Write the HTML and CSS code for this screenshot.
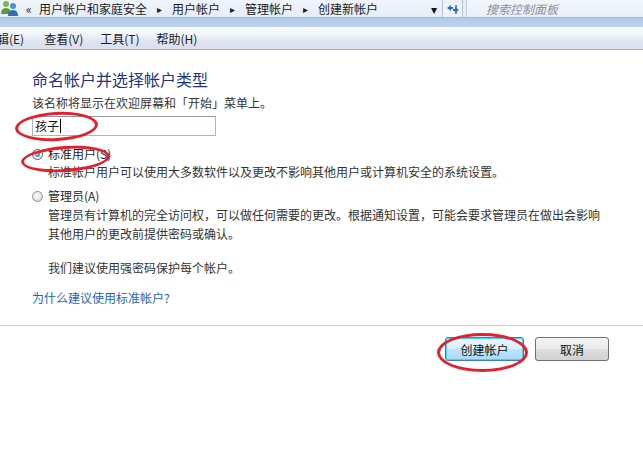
FILE: index.html
```html
<!DOCTYPE html>
<html lang="zh-CN">
<head>
<meta charset="utf-8">
<title>创建新帐户</title>
<link rel="stylesheet" href="styles.css">
</head>
<body>
<div class="window">
  <div class="addrbar">
    <div class="addr">
      <svg class="users-icon" width="18" height="16" viewBox="0 0 18 16">
        <circle cx="5" cy="4" r="3" fill="#7fb84a"/>
        <path d="M0 14 Q0 8 5 8 Q10 8 10 14 Z" fill="#5e9a2f"/>
        <circle cx="12" cy="6" r="3" fill="#4a8fd8"/>
        <path d="M7 16 Q7 10 12 10 Q17 10 17 16 Z" fill="#2f6fb8"/>
      </svg>
      <span class="chev">«</span>
      <span class="crumb">用户帐户和家庭安全</span><span class="sep">▸</span>
      <span class="crumb">用户帐户</span><span class="sep">▸</span>
      <span class="crumb">管理帐户</span><span class="sep">▸</span>
      <span class="crumb">创建新帐户</span>
      <span class="drop">▾</span>
    </div>
    <div class="refresh">
      <svg width="16" height="14" viewBox="0 0 16 14">
        <path d="M2 6 L6 3 L6 5 L8 5 L8 7 L6 7 L6 9 Z" fill="#2a6fb5"/>
        <path d="M14 8 L10 11 L10 9 L8 9 L8 7 L10 7 L10 5 Z" fill="#2a6fb5"/>
        <path d="M11 3 L11 12" stroke="#2a6fb5" stroke-width="1.5"/>
      </svg>
    </div>
    <div class="search">搜索控制面板</div>
  </div>
  <div class="band"></div>
  <div class="menubar">
    <span class="menu cut">辑(E)</span>
    <span class="menu">查看(V)</span>
    <span class="menu">工具(T)</span>
    <span class="menu">帮助(H)</span>
  </div>

  <div class="content">
    <h1 class="title">命名帐户并选择帐户类型</h1>
    <p class="hint">该名称将显示在欢迎屏幕和「开始」菜单上。</p>
    <div class="namebox"><span class="val">孩子</span><span class="caret"></span></div>

    <div class="option opt1">
      <span class="radio checked"></span><span class="label">标准用户(S)</span>
    </div>
    <p class="desc">标准帐户用户可以使用大多数软件以及更改不影响其他用户或计算机安全的系统设置。</p>

    <div class="option opt2">
      <span class="radio"></span><span class="label">管理员(A)</span>
    </div>
    <p class="desc desc2">管理员有计算机的完全访问权，可以做任何需要的更改。根据通知设置，可能会要求管理员在做出会影响<br>其他用户的更改前提供密码或确认。</p>

    <p class="desc recommend">我们建议使用强密码保护每个帐户。</p>

    <a class="link" href="#">为什么建议使用标准帐户?</a>
  </div>

  <div class="footer">
    <button class="btn primary">创建帐户</button>
    <button class="btn">取消</button>
  </div>

  <div class="mark mark1"></div>
  <div class="mark mark2"></div>
  <div class="mark mark3"></div>
</div>
</body>
</html>
```

FILE: styles.css
```css
* { box-sizing: border-box; }
html, body {
  margin: 0;
  padding: 0;
  background: #ffffff;
}
body {
  font-family: "Noto Sans CJK SC", "Noto Sans", sans-serif;
  font-size: 12px;
  color: #333333;
}
.window {
  position: relative;
  width: 643px;
  height: 451px;
  overflow: hidden;
  background: #ffffff;
}

/* address bar */
.addrbar {
  display: flex;
  height: 18px;
  background: #e7eef8;
  border-bottom: 1px solid #a9b8cc;
}
.addr {
  display: flex;
  align-items: center;
  width: 442px;
  height: 17px;
  padding-left: 1px;
  background: linear-gradient(#f0f5fb, #e6eef8);
  color: #1a1a1a;
  white-space: nowrap;
}
.users-icon { margin-top: -2px; }
.chev {
  font-size: 12px;
  margin-left: 7px;
  color: #222;
  width: 13px;
  line-height: 17px;
}
.crumb {
  line-height: 17px;
  font-size: 12px;
}
.sep {
  font-size: 10px;
  color: #222;
  width: 25px;
  text-align: center;
}
.drop {
  margin-left: auto;
  margin-right: 3px;
  font-size: 12px;
  color: #111;
  width: 8px;
}
.refresh {
  width: 21px;
  height: 17px;
  border-left: 1px solid #b6c3d4;
  border-right: 1px solid #b6c3d4;
  display: flex;
  align-items: center;
  justify-content: center;
  background: #eef3fa;
}
.search {
  flex: 1;
  height: 17px;
  margin-left: 3px;
  border-left: 1px solid #c3cedc;
  background: linear-gradient(#f2f6fb, #e9f0f8);
  color: #8a8f99;
  font-style: italic;
  padding-left: 19px;
  line-height: 17px;
  font-size: 12px;
}
.band {
  height: 9px;
  background: linear-gradient(#b0cbe9, #bdd3ec);
}
.menubar {
  display: flex;
  height: 23px;
  align-items: center;
  background: linear-gradient(#fbfcfe 0%, #f2f5fb 30%, #dfe5f1 60%, #d9e0ee 100%);
  border-top: 1px solid #ffffff;
  border-bottom: 1px solid #a8b0c0;
  color: #1e1e1e;
}
.menu {
  line-height: 18px;
  margin-right: 17px;
}
.menu.cut { margin-left: -3px; margin-right: 20px; }

/* content */
.content {
  padding-left: 32px;
  padding-top: 18px;
  height: 276px;
  border-bottom: 1px solid #cccccc;
}
.title {
  margin: 0;
  font-size: 16px;
  font-weight: normal;
  line-height: 22px;
  color: #1e3387;
}
.hint {
  margin: 4px 0 0;
  line-height: 18px;
}
.namebox {
  display: flex;
  align-items: center;
  margin-top: 4px;
  width: 184px;
  height: 20px;
  border: 1px solid #abb6c4;
  border-top-color: #8d9aab;
  padding-left: 2px;
}
.val { color: #111; font-size: 12px; line-height: 18px; }
.caret {
  width: 1px;
  height: 14px;
  background: #000;
  margin-left: 1px;
}
.option {
  display: flex;
  align-items: center;
  height: 18px;
}
.opt1 { margin-top: 9px; }
.opt2 { margin-top: 6px; }
.radio {
  width: 11px;
  height: 11px;
  border-radius: 50%;
  border: 1px solid #8e8f8f;
  background: radial-gradient(circle at 40% 35%, #ffffff, #d0d0d0);
  margin-right: 5px;
  margin-top: 1px;
  position: relative;
}
.radio.checked {
  border-color: #4e5f70;
  background: #f4f4f4;
}
.radio.checked::after {
  content: "";
  position: absolute;
  left: 2px;
  top: 2px;
  width: 5px;
  height: 5px;
  border-radius: 50%;
  background: radial-gradient(circle at 35% 35%, #8fd3f7, #1f6fb2);
}
.label { line-height: 18px; color: #1e1e1e; }
.desc {
  margin: 0;
  padding-left: 16px;
  line-height: 18px;
}
.desc2 { line-height: 19px; }
.recommend { margin-top: 16px; }
.link {
  display: block;
  margin-top: 12px;
  line-height: 18px;
  color: #1f64b8;
  text-decoration: none;
}

/* footer buttons */
.footer {
  display: flex;
  justify-content: flex-end;
  gap: 11px;
  padding-top: 11px;
  padding-right: 34px;
}
.btn {
  width: 74px;
  height: 24px;
  padding: 0;
  font-family: "Noto Sans CJK SC", "Noto Sans", sans-serif;
  font-size: 12px;
  color: #111;
  border: 1px solid #707070;
  border-radius: 3px;
  background: linear-gradient(#f3f3f3 0%, #ebebeb 48%, #dddddd 52%, #d1d1d1 100%);
}
.btn.primary {
  width: 79px;
  border-color: #3c7fb1;
  background: linear-gradient(#eaf6fd 0%, #d9f0fc 48%, #bee6fd 52%, #a7d9f5 100%);
  box-shadow: inset 0 0 0 1px #48d0f8;
}

/* red hand-drawn markers */
.mark {
  position: absolute;
  border: 3px solid #e3202c;
  border-radius: 50%;
  pointer-events: none;
}
.mark1 {
  left: 15px;
  top: 112px;
  width: 83px;
  height: 29px;
  transform: rotate(-3deg);
}
.mark2 {
  left: 21px;
  top: 146px;
  width: 89px;
  height: 26px;
  transform: rotate(-4deg);
}
.mark3 {
  left: 437px;
  top: 333px;
  width: 91px;
  height: 39px;
}
```
